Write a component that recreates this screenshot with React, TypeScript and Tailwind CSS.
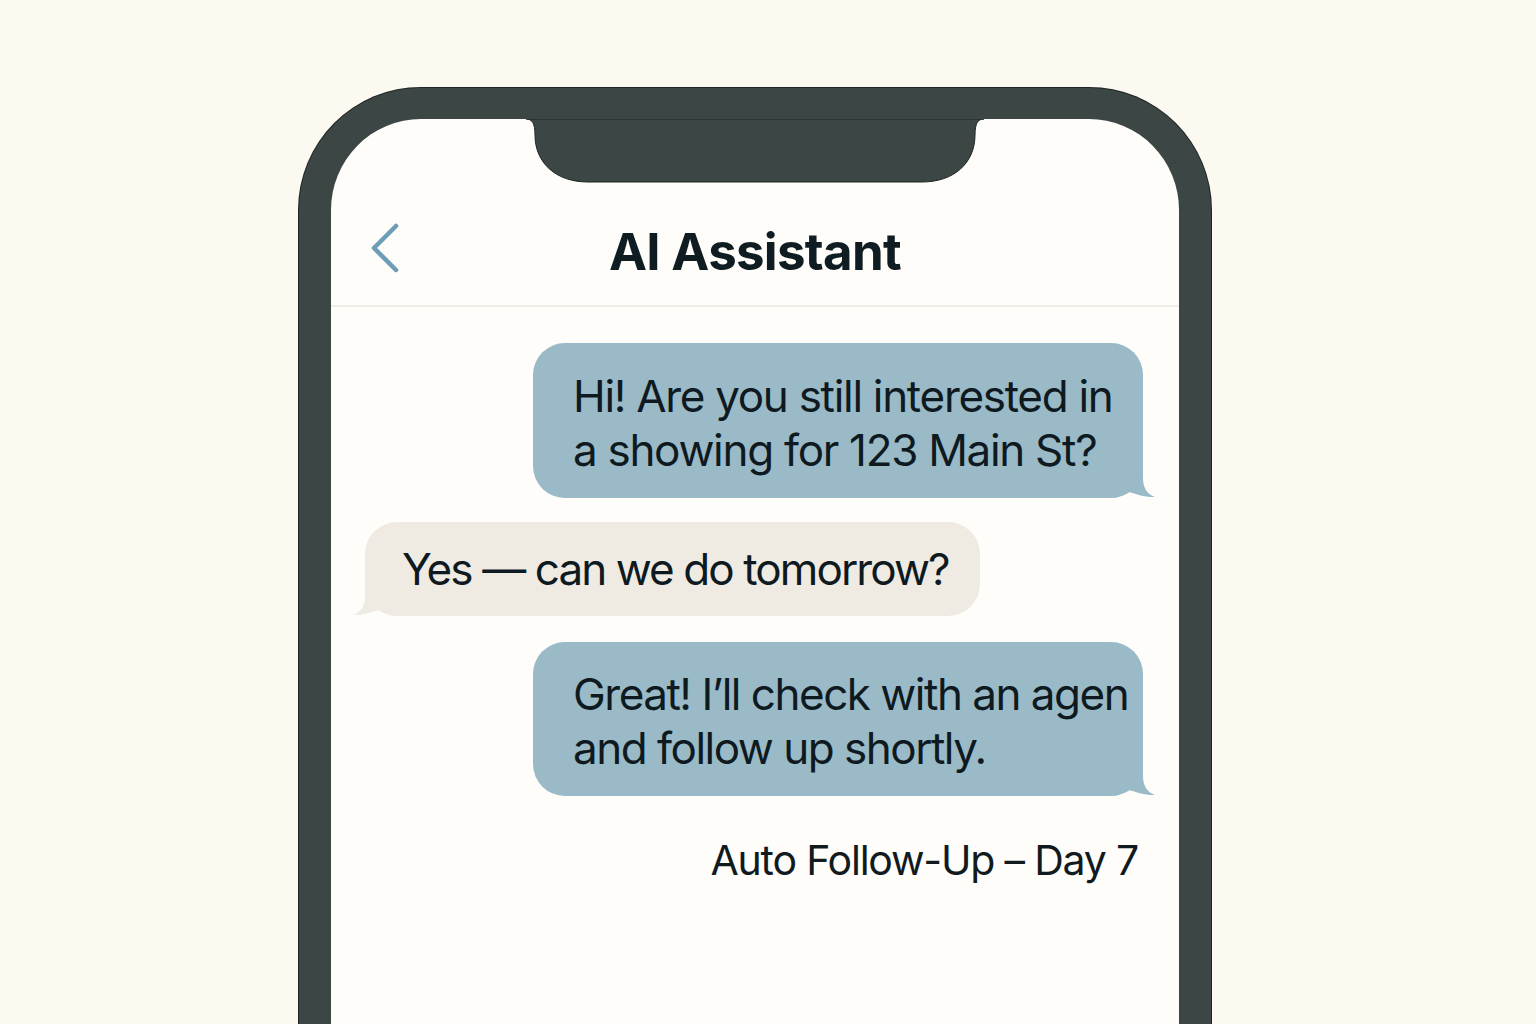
import React from "react";

const font = { fontFamily: "Inter, 'Liberation Sans', sans-serif" };

const RightTail = ({ color }: { color: string }) => (
  <svg className="absolute right-[-13px] bottom-0" width="43" height="34" viewBox="0 0 43 34">
    <path
      d="M0 0 L30 0 L30 14 C30 24 34 30 42 33 C33 33.5 22 30 15 27.5 C10 31 5 34 0 34 Z"
      fill={color}
    />
  </svg>
);

const LeftTail = ({ color }: { color: string }) => (
  <svg className="absolute left-[-13px] bottom-0 -scale-x-100" width="43" height="34" viewBox="0 0 43 34">
    <path
      d="M0 0 L30 0 L30 14 C30 24 34 30 42 33 C33 33.5 22 30 15 27.5 C10 31 5 34 0 34 Z"
      fill={color}
    />
  </svg>
);

const Notch = () => (
  <svg className="absolute top-0 left-1/2 -translate-x-1/2" width="458" height="64" viewBox="0 0 458 64">
    <path
      d="M0 0 C6 0 9 4 9 16 C9 44 30 63 62 63 L396 63 C428 63 449 44 449 16 C449 4 452 0 458 0 Z"
      fill="#3c4644"
      stroke="#1e2524"
      strokeWidth="1"
    />
  </svg>
);

const App: React.FC = () => {
  return (
    <div className="w-full h-[1024px] bg-[#fcf9f0] overflow-hidden flex justify-center pt-[88px]" style={font}>
      <div className="relative ml-[-26px] w-[912px] h-[1000px] shrink-0 bg-[#fefdf9] border-[#3c4644] border-t-[31px] border-x-[32px] border-b-0 rounded-t-[122px] shadow-[0_0_0_1px_#1e2524]">
        <Notch />

        <div className="relative flex justify-center pt-[107px] pb-[28px] border-b-2 border-[#f0eee9]">
          <svg className="absolute left-[39px] top-[104px]" width="30" height="50" viewBox="0 0 30 50">
            <path d="M26 3 L4 25 L26 47" fill="none" stroke="#6b9db6" strokeWidth="4.5" strokeLinecap="round" strokeLinejoin="round" />
          </svg>
          <h1 className="text-[51px] leading-[51px] font-bold text-[#0f1c21] tracking-[-0.7px]">AI Assistant</h1>
        </div>

        <div className="flex flex-col pl-[34px] pr-[36px] pt-[36px] text-[#0e1a1f] whitespace-nowrap">
          <div className="relative self-end w-[610px] h-[155px] bg-[#9abac8] rounded-[32px] pl-[40px] pt-[26px] text-[44px] leading-[54px] tracking-[-1.3px]">
            <p>Hi! Are you still interested in</p>
            <p>a showing for 123 Main St?</p>
            <RightTail color="#9abac8" />
          </div>

          <div className="relative self-start mt-[24px] w-[615px] h-[94px] bg-[#efebe3] rounded-[32px] pl-[37px] pt-[20px] text-[44px] leading-[54px] tracking-[-1.9px]">
            <p>Yes — can we do tomorrow?</p>
            <LeftTail color="#efebe3" />
          </div>

          <div className="relative self-end mt-[26px] w-[610px] h-[154px] bg-[#9abac8] rounded-[32px] pl-[40px] pt-[25px] text-[44px] leading-[54px] tracking-[-1.5px]">
            <p>Great! I’ll check with an agen</p>
            <p>and follow up shortly.</p>
            <RightTail color="#9abac8" />
          </div>

          <p className="self-end mt-[44px] mr-[5px] text-[41px] leading-[41px] text-[#111a1e] tracking-[-1.2px]">
            Auto Follow-Up – Day 7
          </p>
        </div>
      </div>
    </div>
  );
};

export default App;
